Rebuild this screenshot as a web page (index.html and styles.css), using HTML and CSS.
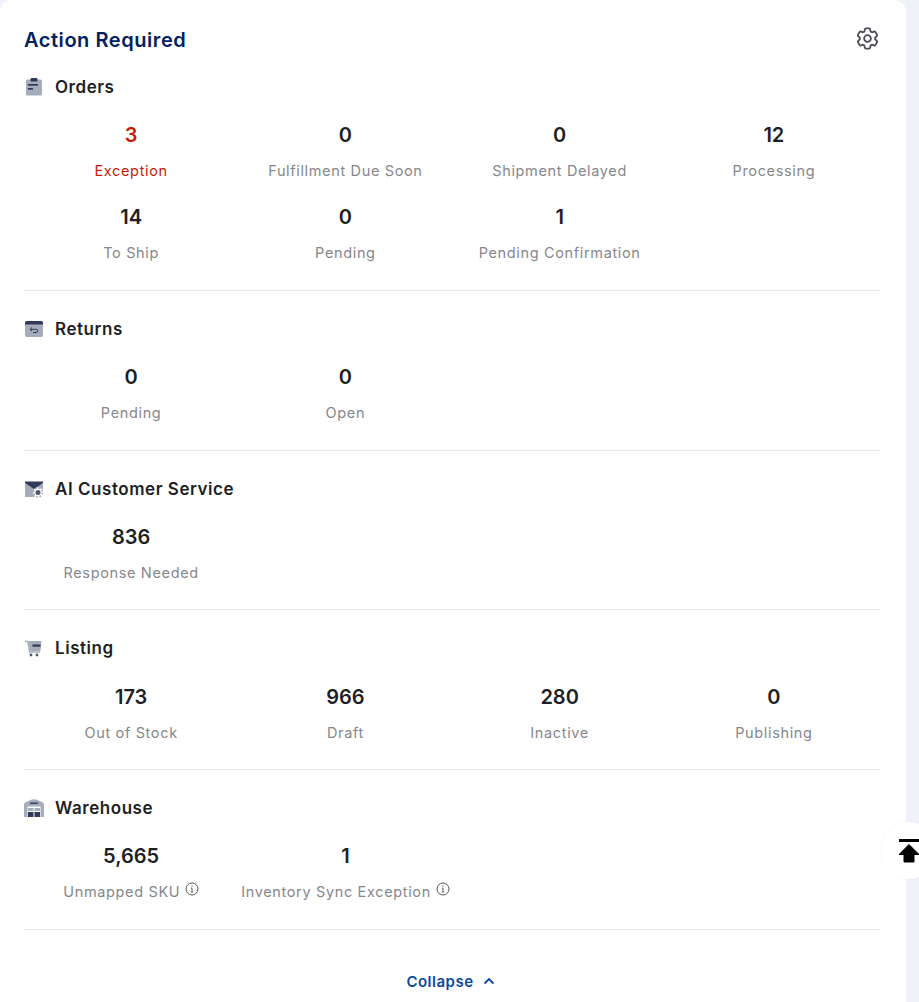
FILE: index.html
```html
<!DOCTYPE html>
<html lang="en">
<head>
  <meta charset="UTF-8">
  <meta name="viewport" content="width=device-width, initial-scale=1.0">
  <title>Action Required</title>
  <link rel="stylesheet" href="styles.css">
</head>
<body>
  <div class="card">
    <div class="card-head">
      <h2>Action Required</h2>
      <svg class="gear" viewBox="0 0 24 24" fill="none" stroke="#4a4d55" stroke-width="1.6" stroke-linejoin="round">
        <path d="M9.594 3.94c.09-.542.56-.94 1.11-.94h2.593c.55 0 1.02.398 1.11.94l.213 1.281c.063.374.313.686.645.87.074.04.147.083.22.127.325.196.72.257 1.075.124l1.217-.456a1.125 1.125 0 0 1 1.37.49l1.296 2.247a1.125 1.125 0 0 1-.26 1.431l-1.003.827c-.293.241-.438.613-.43.992a7.723 7.723 0 0 1 0 .255c-.008.378.137.75.43.991l1.004.827c.424.35.534.955.26 1.43l-1.298 2.247a1.125 1.125 0 0 1-1.369.491l-1.217-.456c-.355-.133-.75-.072-1.076.124a6.47 6.47 0 0 1-.22.128c-.331.183-.581.495-.644.869l-.213 1.281c-.09.543-.56.94-1.11.94h-2.594c-.55 0-1.019-.398-1.11-.94l-.213-1.281c-.062-.374-.312-.686-.644-.87a6.52 6.52 0 0 1-.22-.127c-.325-.196-.72-.257-1.076-.124l-1.217.456a1.125 1.125 0 0 1-1.369-.49l-1.297-2.247a1.125 1.125 0 0 1 .26-1.431l1.004-.827c.292-.24.437-.613.43-.991a6.932 6.932 0 0 1 0-.255c.007-.38-.138-.751-.43-.992l-1.004-.827a1.125 1.125 0 0 1-.26-1.43l1.297-2.247a1.125 1.125 0 0 1 1.37-.491l1.216.456c.356.133.751.072 1.076-.124.072-.044.146-.086.22-.128.332-.183.582-.495.644-.869l.214-1.28Z"/>
        <circle cx="12" cy="12" r="3"/>
      </svg>
    </div>

    <!-- Orders -->
    <div class="section">
      <div class="section-head">
        <svg class="section-icon" viewBox="0 0 19 18">
          <rect x="2" y="1.5" width="16" height="16" rx="1.5" fill="#a6adba"/>
          <rect x="6.500" y="0" width="7" height="3.4" rx="1" fill="#2f3b59"/>
          <rect x="4" y="6" width="10" height="1.7" fill="#2f3b59"/>
          <rect x="4" y="10" width="5" height="1.7" fill="#2f3b59"/>
        </svg>
        <h3>Orders</h3>
      </div>
      <div class="stats">
        <div class="stat danger"><div class="num">3</div><div class="label">Exception</div></div>
        <div class="stat"><div class="num">0</div><div class="label">Fulfillment Due Soon</div></div>
        <div class="stat"><div class="num">0</div><div class="label">Shipment Delayed</div></div>
        <div class="stat"><div class="num">12</div><div class="label">Processing</div></div>
        <div class="stat"><div class="num">14</div><div class="label">To Ship</div></div>
        <div class="stat"><div class="num">0</div><div class="label">Pending</div></div>
        <div class="stat"><div class="num">1</div><div class="label">Pending Confirmation</div></div>
      </div>
    </div>

    <!-- Returns -->
    <div class="section">
      <div class="section-head">
        <svg class="section-icon" viewBox="0 0 19 18">
          <rect x="1" y="1" width="18" height="16" rx="2" fill="#a6adba"/>
          <path d="M1 4.500V3a2 2 0 0 1 2-2h14a2 2 0 0 1 2 2v1.500z" fill="#2f3b59"/>
          <path d="M8 7.500 6 9.300l2 1.800M6.300 9.300h5.900a1.600 1.600 0 0 1 0 3.200H9" fill="none" stroke="#2f3b59" stroke-width="1"/>
        </svg>
        <h3>Returns</h3>
      </div>
      <div class="stats">
        <div class="stat"><div class="num">0</div><div class="label">Pending</div></div>
        <div class="stat"><div class="num">0</div><div class="label">Open</div></div>
      </div>
    </div>

    <!-- AI Customer Service -->
    <div class="section">
      <div class="section-head">
        <svg class="section-icon" viewBox="0 0 19 18">
          <path d="M1 3.500h18V9h-5l-4 3 1 5H1z" fill="#a6adba"/>
          <path d="M1 1.500h18v1.500l-9 6-9-6z" fill="#2f3b59"/>
          <circle cx="14" cy="12.500" r="5" fill="#fff"/>
          <circle cx="14" cy="12.500" r="4.500" fill="none" stroke="#a6adba" stroke-width="1.400" stroke-dasharray="2 1.500"/>
          <circle cx="14" cy="12.500" r="2.500" fill="#4d5770"/>
        </svg>
        <h3>AI Customer Service</h3>
      </div>
      <div class="stats">
        <div class="stat"><div class="num">836</div><div class="label">Response Needed</div></div>
      </div>
    </div>

    <!-- Listing -->
    <div class="section">
      <div class="section-head">
        <svg class="section-icon" viewBox="0 0 19 18">
          <path d="M1 2.500h3l1.500 10.500H16" fill="none" stroke="#a6adba" stroke-width="1.400"/>
          <path d="M4.500 2h13l-1 10H6z" fill="#a6adba"/>
          <rect x="8.500" y="5.500" width="8" height="2.200" fill="#2f3b59"/>
          <circle cx="7" cy="16" r="1.400" fill="#4d5770"/>
          <circle cx="13" cy="16" r="1.400" fill="#4d5770"/>
        </svg>
        <h3>Listing</h3>
      </div>
      <div class="stats">
        <div class="stat"><div class="num">173</div><div class="label">Out of Stock</div></div>
        <div class="stat"><div class="num">966</div><div class="label">Draft</div></div>
        <div class="stat"><div class="num">280</div><div class="label">Inactive</div></div>
        <div class="stat"><div class="num">0</div><div class="label">Publishing</div></div>
      </div>
    </div>

    <!-- Warehouse -->
    <div class="section">
      <div class="section-head">
        <svg class="section-icon wide" viewBox="0 0 20 18">
          <path d="M0 5.500Q0 4 1.500 3.300L7 .8Q10-.2 13 .8l5.500 2.500Q20 4 20 5.500V18H0z" fill="#a6adba"/>
          <rect x="6" y="3.500" width="8" height="1.400" fill="#2f3b59"/>
          <rect x="3.500" y="7.500" width="13" height="10.500" fill="#fff"/>
          <rect x="4" y="9" width="5.500" height="3" fill="#a6adba"/>
          <rect x="10.500" y="9" width="5.500" height="3" fill="#a6adba"/>
          <rect x="4" y="13" width="5.500" height="5" fill="#2f3b59"/>
          <rect x="10.500" y="13" width="5.500" height="5" fill="#2f3b59"/>
        </svg>
        <h3>Warehouse</h3>
      </div>
      <div class="stats">
        <div class="stat">
          <div class="num">5,665</div>
          <div class="label">Unmapped SKU
            <svg class="info" viewBox="0 0 14 14" fill="none" stroke="#55585f" stroke-width="1"><circle cx="7" cy="7" r="6"/><path d="M7 6.200v3.600M5.900 10h2.200M5.900 6.200H7"/><path d="M7 3.600v1.200"/></svg>
          </div>
        </div>
        <div class="stat">
          <div class="num">1</div>
          <div class="label">Inventory Sync Exception
            <svg class="info" viewBox="0 0 14 14" fill="none" stroke="#55585f" stroke-width="1"><circle cx="7" cy="7" r="6"/><path d="M7 6.200v3.600M5.900 10h2.200M5.900 6.200H7"/><path d="M7 3.600v1.200"/></svg>
          </div>
        </div>
      </div>
    </div>

    <div class="collapse">
      Collapse
      <svg class="chevron" viewBox="0 0 12 8" fill="none" stroke="#0b4a9e" stroke-width="1.800"><path d="M1.500 6.500 6 2l4.500 4.500"/></svg>
    </div>
  </div>

  <div class="to-top">
    <svg viewBox="0 0 20 24" width="20" height="24">
      <rect x="0" y="0" width="20" height="3"/>
      <path d="M10 5.500 20 15.500h-5V23H5v-7.500H0z" stroke="#000" stroke-width="1" stroke-linejoin="round"/>
    </svg>
  </div>
</body>
</html>
```

FILE: styles.css
```css
html, body {
  height: 100%;
}
body {
  font-family: Inter, "Noto Sans", sans-serif;
  background-color: #f0f2f9;
  color: #1d1f24;
  margin: 0;
  padding: 0;
  overflow: hidden;
}
.card {
  width: 906px;
  height: 1002px;
  box-sizing: border-box;
  padding: 26px 25px 0 24px;
  background-color: #fff;
  border-radius: 12px 12px 0 0;
}
.card-head {
  display: flex;
  justify-content: space-between;
  align-items: center;
  height: 28px;
  margin-bottom: 21.25px;
}
h2 {
  margin: 0;
  font-size: 20px;
  font-weight: 600;
  color: #03205f;
  letter-spacing: 0.55px;
}
.gear {
  width: 27px;
  height: 27px;
  margin-top: -4px;
}
.section {
  padding-bottom: 2.5px;
  margin-bottom: 26px;
  border-bottom: 1px solid #e6e7ea;
}
.section-head {
  display: flex;
  align-items: center;
  gap: 12px;
  height: 24px;
  margin-bottom: 24.2px;
}
.section-icon {
  width: 19px;
  height: 18px;
}
.section-icon.wide {
  width: 20px;
  margin-right: -1px;
}
h3 {
  margin: 0;
  font-size: 17px;
  font-weight: 600;
  letter-spacing: 0.55px;
}
.stats {
  display: grid;
  grid-template-columns: repeat(4, 1fr);
}
.stat {
  height: 82px;
  text-align: center;
}
.num {
  height: 24px;
  line-height: 24px;
  font-size: 20px;
  font-weight: 600;
  margin-bottom: 13px;
}
.label {
  height: 22px;
  line-height: 22px;
  font-size: 14.5px;
  color: #85878c;
  letter-spacing: 0.65px;
}
.danger .num,
.danger .label {
  color: #c41d06;
}
.info {
  width: 14px;
  height: 14px;
  vertical-align: 1px;
}
.collapse {
  display: flex;
  justify-content: center;
  align-items: center;
  gap: 9px;
  margin-top: 42px;
  padding-right: 4px;
  font-size: 15px;
  font-weight: 600;
  color: #0b4a9e;
  letter-spacing: 0.5px;
}
.chevron {
  width: 12px;
  height: 8px;
}
.to-top {
  position: absolute;
  left: 881px;
  top: 822px;
  width: 57px;
  height: 57px;
  border-radius: 50%;
  background-color: #fff;
  box-shadow: 0 0 4px rgba(0, 0, 0, 0.04);
}
.to-top svg {
  position: absolute;
  left: 18px;
  top: 17px;
}
```
